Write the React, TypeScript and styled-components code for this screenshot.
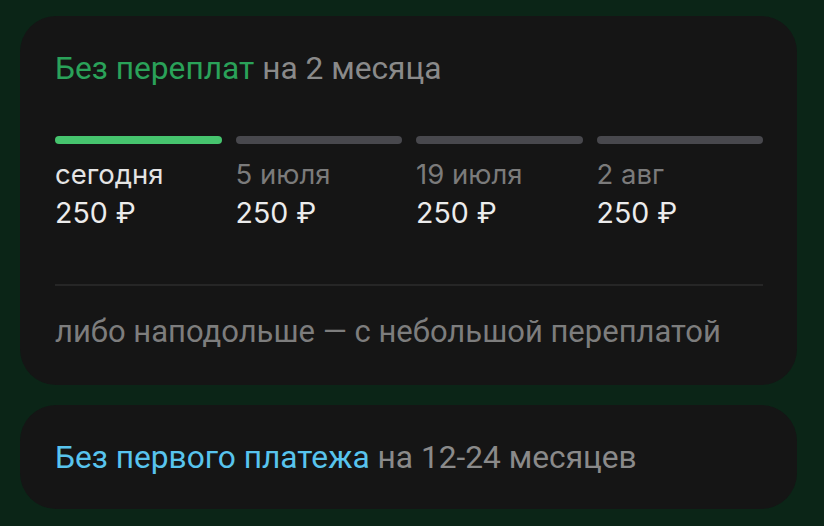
import React from 'react'
import styled, { createGlobalStyle } from 'styled-components'

const GlobalStyle = createGlobalStyle`
  html, body {
    margin: 0;
    padding: 0;
    background: #0b2517;
  }
  body {
    font-family: Roboto, "Noto Sans", sans-serif;
  }
`

type Payment = { date: string; amount: string; active?: boolean }

const payments: Payment[] = [
  { date: 'сегодня', amount: '250 ₽', active: true },
  { date: '5 июля', amount: '250 ₽' },
  { date: '19 июля', amount: '250 ₽' },
  { date: '2 авг', amount: '250 ₽' },
]

const App = () => {
  return (
    <>
      <GlobalStyle />
      <Page>
        <Card>
          <Title>
            <Accent color="#2aa259">Без переплат</Accent> на 2 месяца
          </Title>
          <Schedule>
            {payments.map((p) => (
              <Step key={p.date}>
                <Bar active={p.active} />
                <DateLabel active={p.active}>{p.date}</DateLabel>
                <Amount>{p.amount}</Amount>
              </Step>
            ))}
          </Schedule>
          <Divider />
          <Note>либо наподольше — с небольшой переплатой</Note>
        </Card>
        <Card compact>
          <Title>
            <Accent color="#58c4ee">Без первого платежа</Accent> на 12-24 месяцев
          </Title>
        </Card>
      </Page>
    </>
  )
}

export default App

const Page = styled.div`
  display: flex;
  flex-direction: column;
  gap: 20px;
  padding: 16px 27px 0 20px;
  height: 526px;
  box-sizing: border-box;
  overflow: hidden;
`

const Card = styled.div<{ compact?: boolean }>`
  background: #151515;
  border-radius: 36px;
  padding: ${(p) => (p.compact ? '34px 34px 33px 35px' : '34px 34px 35px 35px')};
  display: flex;
  flex-direction: column;
`

const Title = styled.div`
  font-family: Roboto, sans-serif;
  font-size: 31.7px;
  line-height: 37px;
  color: #8a8a8a;
  white-space: nowrap;
`

const Accent = styled.span<{ color: string }>`
  color: ${(p) => p.color};
`

const Schedule = styled.div`
  display: grid;
  grid-template-columns: repeat(4, 1fr);
  column-gap: 14px;
  margin-top: 49px;
`

const Step = styled.div`
  display: flex;
  flex-direction: column;
`

const Bar = styled.div<{ active?: boolean }>`
  height: 8px;
  border-radius: 4px;
  background: ${(p) => (p.active ? '#46c46e' : '#48484d')};
  margin-bottom: 14px;
`

const DateLabel = styled.div<{ active?: boolean }>`
  font-family: Inter, "Noto Sans", sans-serif;
  font-size: 27.5px;
  line-height: 33px;
  color: ${(p) => (p.active ? '#e4e4e4' : '#7b7b7b')};
  margin-bottom: 5px;
`

const Amount = styled.div`
  font-family: Inter, "Noto Sans", sans-serif;
  font-size: 28.5px;
  line-height: 34px;
  color: #ececec;
`

const Divider = styled.div`
  height: 2px;
  background: #262626;
  margin: 54px 0 28px;
`

const Note = styled.div`
  font-family: Roboto, sans-serif;
  font-size: 31px;
  line-height: 36px;
  color: #7d7d7d;
  white-space: nowrap;
`
